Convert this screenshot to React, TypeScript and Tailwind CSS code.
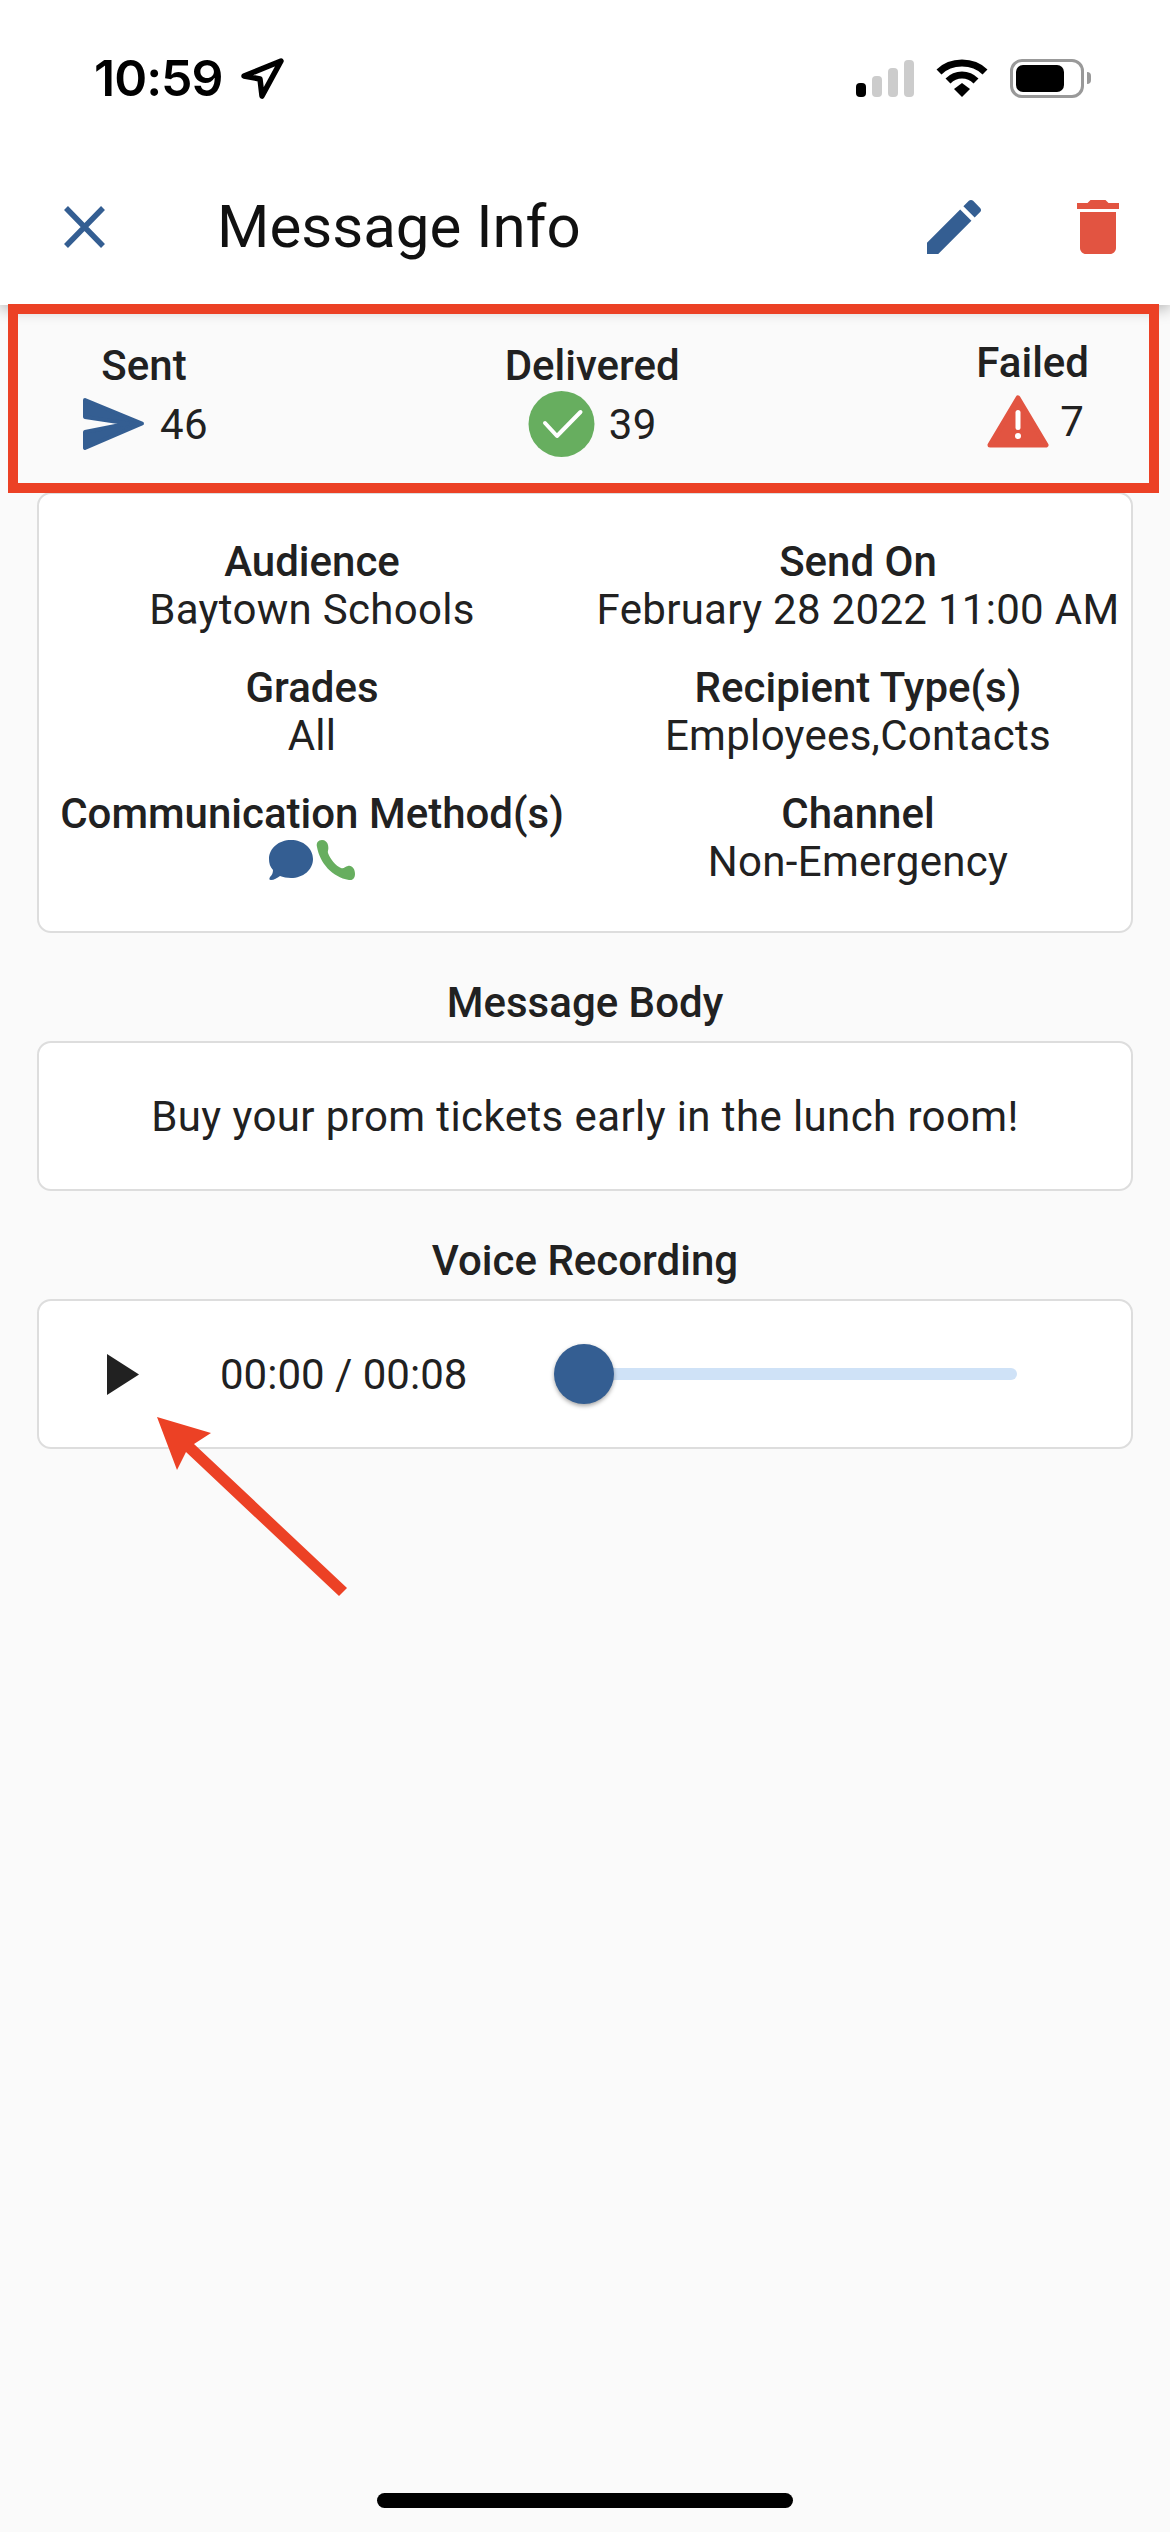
import type { ReactNode } from 'react';

const BLUE = '#345e92';
const RED = '#e25441';
const GREEN = '#67ae5f';

function StatusBar() {
  return (
    <div className="h-[156px] flex items-center pl-[94px] pr-[79px]">
      <span className="font-['Inter'] font-semibold text-[50px] leading-none tracking-[-1px] text-black">10:59</span>
      <svg className="ml-[17px]" width="44" height="44" viewBox="0 0 44 44" fill="none">
        <path d="M4 20 L41 5 L22 40 L20 23 Z" stroke="#000" strokeWidth="5.5" strokeLinejoin="round" />
      </svg>
      <div className="flex-1" />
      <div className="flex items-end gap-[6px] h-[38px]">
        <div className="w-[10px] h-[14px] rounded-[4px] bg-black" />
        <div className="w-[10px] h-[21px] rounded-[4px] bg-[#cccccc]" />
        <div className="w-[10px] h-[29px] rounded-[4px] bg-[#cccccc]" />
        <div className="w-[10px] h-[37px] rounded-[4px] bg-[#cccccc]" />
      </div>
      <svg className="ml-[22px]" width="52" height="38" viewBox="0 0 52 38" fill="none">
        <path d="M3 13 C15 1 37 1 49 13" stroke="#000" strokeWidth="7" />
        <path d="M12 22 C20 14 32 14 40 22" stroke="#000" strokeWidth="7" />
        <path d="M18 30 L26 24 L34 30 L26 38 Z" fill="#000" />
      </svg>
      <div className="ml-[22px] flex items-center">
        <div className="w-[74px] h-[39px] rounded-[12px] border-[3px] border-[#999999] p-[3px]">
          <div className="w-[48px] h-full rounded-[7px] bg-black" />
        </div>
        <div className="ml-[3px] w-[4px] h-[12px] rounded-r-[4px] bg-[#999999]" />
      </div>
    </div>
  );
}

function Header() {
  return (
    <div className="relative z-10 bg-white shadow-[0_4px_14px_rgba(0,0,0,0.28)]">
      <StatusBar />
      <div className="h-[149px] flex items-center pb-[8px] pl-[64px] pr-[36px]">
        <svg width="41" height="42" viewBox="0 0 41 42" fill="none">
          <path d="M2 2 L39 40 M39 2 L2 40" stroke={BLUE} strokeWidth="5.5" />
        </svg>
        <span className="ml-[112px] font-['Roboto'] text-[60px] leading-none text-[#111111]">Message Info</span>
        <div className="flex-1" />
        <svg width="72" height="72" viewBox="0 0 24 24" fill={BLUE}>
          <path d="M3 17.25V21h3.75L17.81 9.94l-3.75-3.75L3 17.25zM20.71 7.04c.39-.39.39-1.02 0-1.41l-2.34-2.34c-.39-.39-1.02-.39-1.41 0l-1.83 1.83 3.75 3.75 1.83-1.83z" />
        </svg>
        <svg className="ml-[72px]" width="72" height="72" viewBox="0 0 24 24" fill={RED}>
          <path d="M6 19c0 1.1.9 2 2 2h8c1.1 0 2-.9 2-2V7H6v12zM19 4h-3.5l-1-1h-5l-1 1H5v2h14V4z" />
        </svg>
      </div>
    </div>
  );
}

function Stat({ label, count, icon, className }: { label: string; count: string; icon: ReactNode; className?: string }) {
  return (
    <div className={`flex flex-col items-center ${className ?? ''}`}>
      <span className="font-medium leading-[48px]">{label}</span>
      <div className="flex items-center h-[68px] gap-[14px] tracking-[0.4px]">
        {icon}
        <span>{count}</span>
      </div>
    </div>
  );
}

function StatsRow() {
  return (
    <div className="h-[187px] flex justify-between items-start pt-[37px] pl-[80px] pr-[81px]">
      <Stat
        label="Sent"
        count="46"
        icon={
          <svg className="ml-[2px]" width="64" height="56" viewBox="0 0 64 56" fill={BLUE} stroke={BLUE} strokeWidth="4" strokeLinejoin="round">
            <path d="M3 4 L60 27.5 L3 52 L3 36 L46 27.5 L3 21 Z" />
          </svg>
        }
      />
      <Stat
        label="Delivered"
        count="39"
        icon={
          <svg width="67" height="66" viewBox="0 0 67 66" fill="none">
            <circle cx="33.5" cy="33" r="33" fill={GREEN} />
            <path d="M17 32 L29 45 L52.5 21" stroke="#fff" strokeWidth="4" strokeLinecap="round" strokeLinejoin="round" />
          </svg>
        }
      />
      <Stat
        label="Failed"
        count="7"
        className="-mt-[3px]"
        icon={
          <svg className="ml-[6px] -mr-[3px]" width="62" height="55" viewBox="0 0 62 55" fill={RED}>
            <path d="M31 4 L59 51 L3 51 Z" stroke={RED} strokeWidth="5" strokeLinejoin="round" />
            <rect x="28.5" y="16" width="5" height="20" rx="2.5" fill="#fff" />
            <circle cx="31" cy="42" r="3" fill="#fff" />
          </svg>
        }
      />
    </div>
  );
}

function Info({ label, children }: { label: string; children: ReactNode }) {
  return (
    <div className="flex flex-col items-center">
      <span className="font-medium leading-[48px] whitespace-nowrap">{label}</span>
      <div className="leading-[48px] whitespace-nowrap tracking-[0.3px]">{children}</div>
    </div>
  );
}

function Card({ className, children }: { className?: string; children: ReactNode }) {
  return (
    <div className={`mx-[37px] bg-white border-2 border-[#dddddd] rounded-[14px] ${className ?? ''}`}>{children}</div>
  );
}

function DetailsCard() {
  return (
    <Card className="h-[441px] pt-[44px] grid grid-cols-2 gap-y-[30px] content-start">
      <Info label="Audience">Baytown Schools</Info>
      <Info label="Send On">February 28 2022 11:00 AM</Info>
      <Info label="Grades">All</Info>
      <Info label="Recipient Type(s)">Employees,Contacts</Info>
      <Info label="Communication Method(s)">
        <div className="flex items-start gap-[2px] pt-[1px]">
          <svg width="46" height="42" viewBox="0 0 46 42" fill={BLUE}>
            <path d="M23 1 C35 1 45 9 45 20 C45 31 35 39 23 39 C19 39 15 38 12 37 C9 39 6 41 3 41 C1 41 1 40 2 38 C4 36 5 34 5 31 C2 28 1 24 1 20 C1 9 11 1 23 1 Z" />
          </svg>
          <svg width="40" height="42" viewBox="0 0 40 42" fill={GREEN}>
            <path d="M6 1 C2 1 0 4 1 8 C4 24 16 38 33 41 C37 41.500 39 39 39 35 C39 30 36 26 32 27 C29 27.500 28 30 25 29 C20 27 14 20 12 14 C11.500 11 13 11 12 6 C11.500 3 9 1 6 1 Z" />
          </svg>
        </div>
      </Info>
      <Info label="Channel">Non-Emergency</Info>
    </Card>
  );
}

function Heading({ children }: { children: ReactNode }) {
  return <div className="mt-[46px] mb-[14px] text-center font-medium leading-[48px]">{children}</div>;
}

function VoicePlayer() {
  return (
    <Card className="h-[150px] flex items-center pl-[68px]">
      <svg width="32" height="41" viewBox="0 0 32 41" fill="#212121">
        <path d="M0 0 L32 20.500 L0 41 Z" />
      </svg>
      <span className="ml-[81px]">00:00 / 00:08</span>
      <div className="relative ml-[87px] w-[463px] h-[12px] rounded-full bg-[#cfe2f7]">
        <div className="absolute left-0 top-[-24px] w-[60px] h-[60px] rounded-full bg-[#345e92] shadow-[0_2px_4px_rgba(0,0,0,0.35)]" />
      </div>
    </Card>
  );
}

export default function App() {
  return (
    <div className="relative w-[1170px] h-[2532px] overflow-hidden flex flex-col bg-[#fafafa] font-['Roboto',sans-serif] text-[42px] text-[#212121]">
      <Header />
      <StatsRow />
      <DetailsCard />
      <Heading>Message Body</Heading>
      <Card className="h-[150px] flex items-center justify-center tracking-[0.4px]">Buy your prom tickets early in the lunch room!</Card>
      <Heading>Voice Recording</Heading>
      <VoicePlayer />
      <div className="mt-auto mb-[24px] mx-auto w-[416px] h-[15px] rounded-full bg-black" />

      {/* annotations drawn on top of the screenshot */}
      <div className="absolute z-20 left-[8px] top-[304px] w-[1151px] h-[189px] border-[10px] border-[#ec4125]" />
      <svg className="absolute z-20 left-[150px] top-[1410px]" width="205" height="190" viewBox="150 1410 205 190" fill="#ec4125">
        <polygon points="157,1417 211,1433 194,1444 347,1588 339,1596 186,1452 177,1470" />
      </svg>
    </div>
  );
}
